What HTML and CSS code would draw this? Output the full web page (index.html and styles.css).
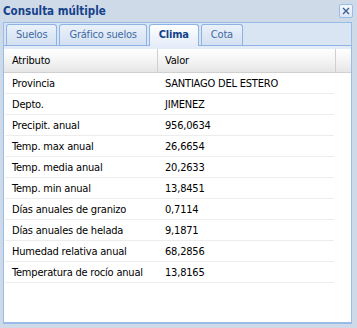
FILE: index.html
```html
<!DOCTYPE html>
<html lang="es">
<head>
  <meta charset="UTF-8">
  <meta name="viewport" content="width=device-width, initial-scale=1.0">
  <title>Consulta múltiple</title>
  <link rel="stylesheet" href="styles.css">
</head>
<body>
  <div class="window">
    <div class="win-header">
      <span class="win-title">Consulta múltiple</span>
      <button class="win-close" title="Cerrar">
        <svg width="8" height="8" viewBox="0 0 8 8"><path d="M1 1L7 7M7 1L1 7" stroke="#3f5f95" stroke-width="1.4" fill="none"/></svg>
      </button>
    </div>

    <div class="win-body">
      <ul class="tab-strip">
        <li class="tab">Suelos</li>
        <li class="tab">Gráfico suelos</li>
        <li class="tab active">Clima</li>
        <li class="tab">Cota</li>
      </ul>
      <div class="tab-spacer"></div>

      <div class="grid">
        <div class="grid-head">
          <div class="cell col-attr">Atributo</div>
          <div class="cell col-val">Valor</div>
        </div>
        <div class="grid-body" id="grid-body"></div>
      </div>
    </div>
  </div>

  <script>
    const rows = [
      ['Provincia', 'SANTIAGO DEL ESTERO'],
      ['Depto.', 'JIMENEZ'],
      ['Precipit. anual', '956,0634'],
      ['Temp. max anual', '26,6654'],
      ['Temp. media anual', '20,2633'],
      ['Temp. min anual', '13,8451'],
      ['Días anuales de granizo', '0,7114'],
      ['Días anuales de helada', '9,1871'],
      ['Humedad relativa anual', '68,2856'],
      ['Temperatura de rocío anual', '13,8165']
    ];

    const body = document.getElementById('grid-body');
    rows.forEach(r => {
      const row = document.createElement('div');
      row.className = 'grid-row';
      row.innerHTML = `<div class="cell col-attr">${r[0]}</div><div class="cell col-val">${r[1]}</div>`;
      body.appendChild(row);
    });
  </script>
</body>
</html>
```

FILE: styles.css
```css
* {
  box-sizing: border-box;
}

body {
  margin: 0;
  font-family: 'DejaVu Sans Condensed', 'DejaVu Sans', sans-serif;
  font-stretch: condensed;
  background: #cfdae8;
}

.window {
  width: 357px;
  height: 328px;
  background: #cfdae8;
  padding: 0 5px 4px 3px;
  display: flex;
  flex-direction: column;
}

.win-header {
  height: 22px;
  display: flex;
  align-items: center;
  justify-content: space-between;
}

.win-title {
  font-weight: bold;
  font-size: 11.5px;
  color: #15428b;
}

.win-close {
  width: 14px;
  height: 14px;
  padding: 0;
  margin-right: -1px;
  border: 1px solid #99bbe8;
  border-radius: 2px;
  background: linear-gradient(#f4f8fd, #dce7f5);
  display: flex;
  align-items: center;
  justify-content: center;
  cursor: pointer;
}

.win-body {
  flex: 1;
  background: white;
  border: 1px solid #99bbe8;
  border-bottom-width: 2px;
  display: flex;
  flex-direction: column;
}

/* Pestañas */
.tab-strip {
  list-style: none;
  margin: 0;
  padding: 1px 0 0 2px;
  display: flex;
  gap: 2px;
  background: #dae5f3;
  border-bottom: 1px solid #8db2e3;
}

.tab {
  height: 21px;
  line-height: 20px;
  padding: 0 9px;
  font-size: 11px;
  letter-spacing: -0.2px;
  color: #416aa3;
  background: linear-gradient(#eaf1fa, #d4e1f2);
  border: 1px solid #8db2e3;
  border-bottom: none;
  border-radius: 3px 3px 0 0;
  cursor: pointer;
}

.tab.active {
  height: 22px;
  margin-bottom: -1px;
  font-weight: bold;
  color: #15428b;
  background: linear-gradient(#ffffff, #e3ecf8);
}

.tab-spacer {
  height: 3px;
  background: #e3ecf8;
}

/* Grilla */
.grid {
  font-size: 11px;
  letter-spacing: -0.2px;
  color: #000;
}

.grid-head {
  display: flex;
  height: 24px;
  background: linear-gradient(#ffffff, #f4f4f4 50%, #e6e6e6);
  border-bottom: 1px solid #d0d0d0;
  padding-left: 1px;
}

.grid-head .cell {
  line-height: 23px;
  border-right: 1px solid #d0d0d0;
}

.grid-head .col-val {
  width: 178px;
}

.grid-body {
  padding-left: 1px;
}

.grid-row {
  display: flex;
  width: 329px;
  height: 21px;
  border-bottom: 1px solid #ededed;
}

.grid-row .cell {
  line-height: 21px;
}

.cell {
  padding: 0 4px 0 7px;
  white-space: nowrap;
  overflow: hidden;
}

.col-attr {
  width: 153px;
}

.col-val {
  width: 175px;
}
```
